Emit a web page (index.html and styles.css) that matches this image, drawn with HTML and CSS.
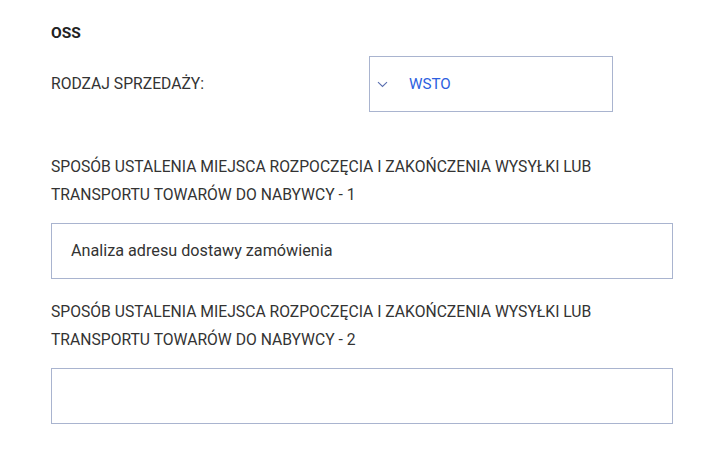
FILE: index.html
```html
<!doctype html>
<html>
    <head>
        <meta charset="utf-8">
        <link rel="stylesheet" href="styles.css">
    </head>
    <body>
        <div class="form">
            <div class="title">OSS</div>

            <div class="row">
                <div class="rowLabel">RODZAJ SPRZEDAŻY:</div>
                <div class="select">
                    <svg class="chev" width="11" height="7" viewBox="0 0 11 7"><path d="M1 1.2 L5.5 5.5 L10 1.2" fill="none" stroke="#5a6fb0" stroke-width="1.1"/></svg>
                    <span class="selValue">WSTO</span>
                </div>
            </div>

            <div class="field">
                <div class="fieldLabel">SPOSÓB USTALENIA MIEJSCA ROZPOCZĘCIA I ZAKOŃCZENIA WYSYŁKI LUB TRANSPORTU TOWARÓW DO NABYWCY - 1</div>
                <div class="input">Analiza adresu dostawy zamówienia</div>
            </div>

            <div class="field">
                <div class="fieldLabel">SPOSÓB USTALENIA MIEJSCA ROZPOCZĘCIA I ZAKOŃCZENIA WYSYŁKI LUB TRANSPORTU TOWARÓW DO NABYWCY - 2</div>
                <div class="input"></div>
            </div>
        </div>
    </body>
</html>
```
FILE: styles.css
```css
body
{
    margin: 0;
    background: #fff;
    font-family: Roboto, "Noto Sans", sans-serif;
    font-size: 15.7px;
    color: #333;
}
.form
{
    width: 622px;
    padding: 19px 0 0 51px;
}
.title
{
    font-weight: bold;
    font-size: 15.5px;
    line-height: 28px;
    color: #222;
}
.row
{
    display: flex;
    align-items: center;
    margin-top: 9px;
}
.rowLabel
{
    width: 318px;
    line-height: 28px;
}
.select
{
    display: flex;
    align-items: center;
    width: 242px;
    height: 54px;
    border: 1px solid #a9b4cf;
}
.chev
{
    margin-left: 7px;
    margin-right: 21px;
}
.selValue
{
    color: #2d5fe0;
    font-size: 15.2px;
}
.field
{
    margin-top: 41px;
}
.field + .field
{
    margin-top: 19px;
}
.fieldLabel
{
    line-height: 28px;
    width: 580px;
}
.input
{
    margin-top: 14px;
    height: 54px;
    line-height: 54px;
    padding-left: 19px;
    border: 1px solid #a9b4cf;
    font-size: 16.2px;
}
```
